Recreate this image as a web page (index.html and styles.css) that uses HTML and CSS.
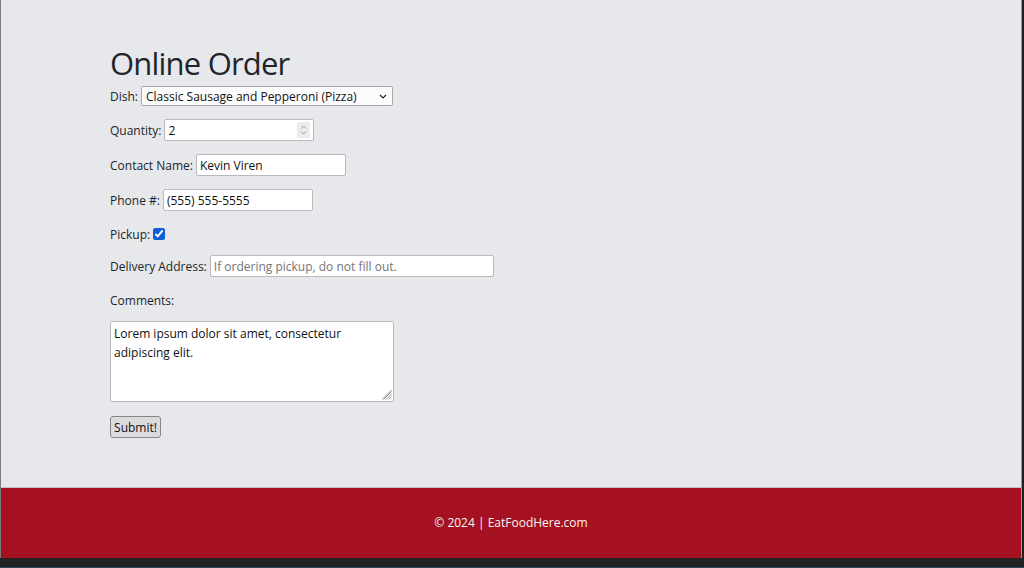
FILE: index.html
```html
<!DOCTYPE html>
<html lang="en">
<head>
<meta charset="utf-8">
<title>Online Order</title>
<link rel="stylesheet" href="styles.css">
</head>
<body>
<div class="window">
  <div class="page">
    <main class="main">
      <h1 class="title">Online Order</h1>
      <form class="order">
        <div class="row row-select">
          <label for="dish">Dish:</label>
          <span class="select-wrap">
            <select id="dish" class="select">
              <option>Classic Sausage and Pepperoni (Pizza)</option>
            </select>
            <svg class="chevron" width="8" height="5" viewBox="0 0 8 5"><path d="M1 1l3 3 3-3" fill="none" stroke="#222" stroke-width="1.2"/></svg>
          </span>
        </div>
        <div class="row">
          <label for="qty">Quantity:</label>
          <span class="field-wrap">
            <input id="qty" class="input input-number" type="number" value="2">
            <span class="spinner">
              <svg width="7" height="12" viewBox="0 0 7 12"><path d="M1 4.5l2.5-2.5 2.5 2.5M1 7.5l2.5 2.5 2.5-2.5" fill="none" stroke="#8d8d92" stroke-width="0.9"/></svg>
            </span>
          </span>
        </div>
        <div class="row">
          <label for="name">Contact Name:</label>
          <input id="name" class="input" type="text" value="Kevin Viren">
        </div>
        <div class="row">
          <label for="phone">Phone #:</label>
          <input id="phone" class="input" type="text" value="(555) 555-5555">
        </div>
        <div class="row row-text">
          <label for="pickup">Pickup:</label>
          <input id="pickup" class="check" type="checkbox" checked>
        </div>
        <div class="row">
          <label for="addr">Delivery Address:</label>
          <input id="addr" class="input input-wide" type="text" placeholder="If ordering pickup, do not fill out.">
        </div>
        <div class="row row-text">
          <label for="comments">Comments:</label>
        </div>
        <span class="textarea-wrap">
          <textarea id="comments" class="textarea">Lorem ipsum dolor sit amet, consectetur adipiscing elit.</textarea>
          <svg class="grip" width="10" height="10" viewBox="0 0 10 10"><path d="M9.5 1.5L1.5 9.5M9.5 4L4 9.5M9.5 6.5L6.5 9.5M9.5 9L9 9.5M9.5 0L0 9.5" fill="none" stroke="#7d7d80" stroke-width="0.8"/></svg>
        </span>
        <button type="button" class="button">Submit!</button>
      </form>
    </main>
    <footer class="footer">© 2024 | EatFoodHere.com</footer>
  </div>
  <div class="statusbar"></div>
</div>
</body>
</html>
```

FILE: styles.css
```css
html, body {
  margin: 0;
  padding: 0;
}
body {
  background: #202020;
  font-family: "Open Sans", "Noto Sans", sans-serif;
  font-size: 12px;
  color: #212529;
}
.window {
  width: 1024px;
  height: 568px;
  display: flex;
  flex-direction: column;
}
.page {
  flex: 1;
  width: 1020px;
  display: flex;
  flex-direction: column;
  background: #e7e8ec;
  border-left: 1px solid #7c7c7c;
  border-right: 1px solid #9a9a9a;
}
.main {
  flex: 1;
  padding: 44px 0 0 109px;
  border-bottom: 1px solid #c3c3c6;
}
.title {
  margin: 0 0 4px;
  font-size: 31px;
  letter-spacing: -0.8px;
  line-height: 38px;
  font-weight: 400;
  color: #212529;
}
.order {
  display: flex;
  flex-direction: column;
  align-items: flex-start;
}
.row {
  display: flex;
  align-items: center;
  gap: 3px;
  height: 22px;
  margin-bottom: 13px;
}
.row-select {
  height: 20px;
}
.row-text {
  height: 20px;
  margin-bottom: 11px;
}
.row label {
  white-space: nowrap;
}
.select-wrap,
.field-wrap,
.textarea-wrap {
  position: relative;
  display: block;
}
.select {
  appearance: none;
  -webkit-appearance: none;
  display: block;
  box-sizing: border-box;
  width: 252px;
  height: 20px;
  font: inherit;
  color: #111;
  background: #fcfcfc;
  border: 1px solid #a8a8ab;
  border-radius: 2px;
  padding: 0 16px 0 4px;
}
.chevron {
  position: absolute;
  right: 6px;
  top: 8px;
}
.input {
  box-sizing: border-box;
  display: block;
  width: 150px;
  height: 22px;
  font: inherit;
  color: #111;
  background: #fff;
  border: 1px solid #b9b9bd;
  border-radius: 2px;
  padding: 1px 3px;
}
.input-number {
  appearance: textfield;
  -moz-appearance: textfield;
}
.input-number::-webkit-inner-spin-button,
.input-number::-webkit-outer-spin-button {
  -webkit-appearance: none;
  margin: 0;
}
.spinner {
  position: absolute;
  right: 4px;
  top: 3px;
  width: 13px;
  height: 16px;
  background: #ececee;
  display: flex;
  align-items: center;
  justify-content: center;
}
.input-wide {
  width: 284px;
}
.input::placeholder {
  color: #757575;
}
.check {
  width: 12px;
  height: 12px;
  margin: 0;
  accent-color: #0d5fd6;
}
.textarea {
  display: block;
  box-sizing: border-box;
  width: 284px;
  height: 81px;
  margin: 0 0 14px;
  font: inherit;
  line-height: 19px;
  color: #111;
  background: #fff;
  border: 1px solid #b9b9bd;
  border-radius: 2px;
  padding: 2px 3px;
  resize: none;
}
.grip {
  position: absolute;
  right: 2px;
  top: 69px;
}
.button {
  box-sizing: border-box;
  height: 22px;
  width: 51px;
  padding: 0 3px;
  font: inherit;
  color: #111;
  background: #dcdcdf;
  border: 1px solid #86868a;
  border-radius: 3px;
}
.footer {
  height: 70px;
  background: #a51120;
  color: #f5f5f5;
  display: flex;
  align-items: center;
  justify-content: center;
  padding-bottom: 1px;
  box-sizing: border-box;
}
.statusbar {
  height: 9px;
  background: #222222;
  border-bottom: 1px solid #2b4a56;
}
```
